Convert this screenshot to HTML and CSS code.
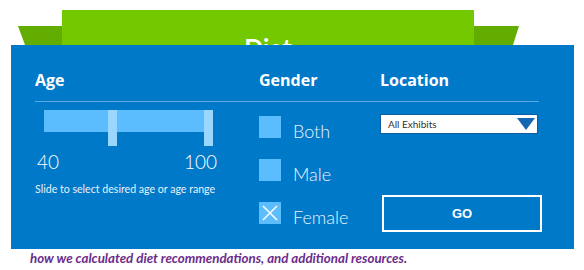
FILE: index.html
```html
<!DOCTYPE html>
<html lang="en">
<head>
	<meta charset="UTF-8">
	<title>Diet</title>
	<link rel="stylesheet" href="styles.css">
</head>
<body>
	<div class="banner">
		<div class="ribbon left"></div>
		<div class="title">Diet</div>
		<div class="ribbon right"></div>
	</div>

	<div class="panel">
		<div class="heads">
			<h2 class="head w-age">Age</h2>
			<h2 class="head w-gender">Gender</h2>
			<h2 class="head">Location</h2>
		</div>
		<div class="rule"></div>

		<div class="cols">
			<div class="w-age">
				<div class="slider">
					<div class="track"></div>
					<div class="handle" style="left: 64px"></div>
					<div class="handle" style="left: 160px"></div>
				</div>
				<div class="range">
					<span>40</span>
					<span>100</span>
				</div>
				<p class="hint">Slide to select desired age or age range</p>
			</div>

			<div class="w-gender gender">
				<label class="check"><span class="box"></span><span class="lbl">Both</span></label>
				<label class="check"><span class="box"></span><span class="lbl">Male</span></label>
				<label class="check"><span class="box">
					<svg width="22" height="22" viewBox="0 0 22 22"><path d="M4 4 L18 18 M18 4 L4 18" stroke="#fff" stroke-width="1.5"/></svg>
				</span><span class="lbl">Female</span></label>
			</div>

			<div class="loc">
				<div class="select">
					<span>All Exhibits</span>
					<svg width="18" height="12" viewBox="0 0 18 12"><path d="M0 0 H18 L9 12 Z" fill="#1467b3"/></svg>
				</div>
				<div class="go">GO</div>
			</div>
		</div>
	</div>

	<p class="note">how we calculated diet recommendations, and additional resources.</p>
</body>
</html>
```

FILE: styles.css
```css
body {
	margin: 0px;
	background-color: #ffffff;
	font-family: Lato, "Open Sans", sans-serif;
	color: #ffffff;
}

/* green header */
.banner {
	display: flex;
	padding: 10px 0px 0px 18px;
	height: 35px;
	overflow: hidden;
}
.ribbon {
	width: 44px;
	height: 19px;
	margin-top: 16px;
	background-color: #63ad00;
}
.ribbon.left {
	clip-path: polygon(0 0, 100% 0, 100% 100%, 7px 100%);
}
.ribbon.right {
	width: 45px;
	clip-path: polygon(0 0, 100% 0, 39px 100%, 0 100%);
}
.title {
	width: 412px;
	height: 35px;
	background-color: #73c800;
	text-align: center;
	font-size: 25px;
	font-weight: 700;
	line-height: 35px;
	padding-top: 20px;
	box-sizing: content-box;
}

/* blue panel */
.panel {
	margin: 0px 10px 0px 11px;
	height: 204px;
	box-sizing: border-box;
	background-color: #0079c9;
	padding: 25px 0px 0px 24px;
}
.heads {
	display: flex;
}
.head {
	margin: 0px;
	font-family: "Open Sans", Lato, sans-serif;
	font-size: 16px;
	font-weight: 700;
	line-height: 20px;
}
.w-age {
	width: 224px;
}
.w-gender {
	width: 121px;
}
.rule {
	width: 504px;
	margin-top: 11px;
	border-top: 1px solid #5ba6e0;
}
.cols {
	display: flex;
}

/* age */
.slider {
	position: relative;
	width: 170px;
	height: 36px;
	margin: 8px 0px 0px 9px;
}
.track {
	margin-top: 8px;
	width: 160px;
	height: 22px;
	background-color: #5bbcfe;
}
.handle {
	position: absolute;
	top: 0px;
	width: 9px;
	height: 36px;
	background-color: #9bd6ff;
}
.range {
	display: flex;
	justify-content: space-between;
	width: 180px;
	margin: 4px 0px 0px 2px;
	font-size: 19px;
	font-weight: 300;
	line-height: 24px;
}
.hint {
	margin: 9px 0px 0px 0px;
	font-size: 10.6px;
	line-height: 12px;
	color: #e6f2fb;
}

/* gender */
.gender {
	display: flex;
	flex-direction: column;
	gap: 21px;
	padding-top: 14px;
}
.check {
	display: flex;
	height: 22px;
}
.box {
	width: 22px;
	height: 22px;
	background-color: #5bbcfe;
}
.box svg {
	display: block;
}
.lbl {
	margin-left: 12px;
	padding-top: 4px;
	font-size: 18px;
	font-weight: 300;
	line-height: 22px;
	color: #eaf5ff;
}

/* location */
.loc {
	padding-top: 12px;
}
.select {
	display: flex;
	justify-content: space-between;
	align-items: center;
	width: 158px;
	height: 20px;
	box-sizing: border-box;
	padding: 0px 2px 0px 7px;
	background-color: #ffffff;
	border: 1px solid #0b5c9e;
	color: #333333;
	font-size: 10px;
}
.go {
	width: 160px;
	height: 37px;
	box-sizing: border-box;
	margin: 61px 0px 0px 2px;
	border: 2px solid #ffffff;
	text-align: center;
	line-height: 33px;
	font-family: "Liberation Sans", Arial, sans-serif;
	font-size: 13px;
	font-weight: 700;
}

.note {
	margin: 1px 0px 0px 30px;
	font-size: 13.3px;
	font-style: italic;
	font-weight: 700;
	color: #6b2c8c;
}
```
